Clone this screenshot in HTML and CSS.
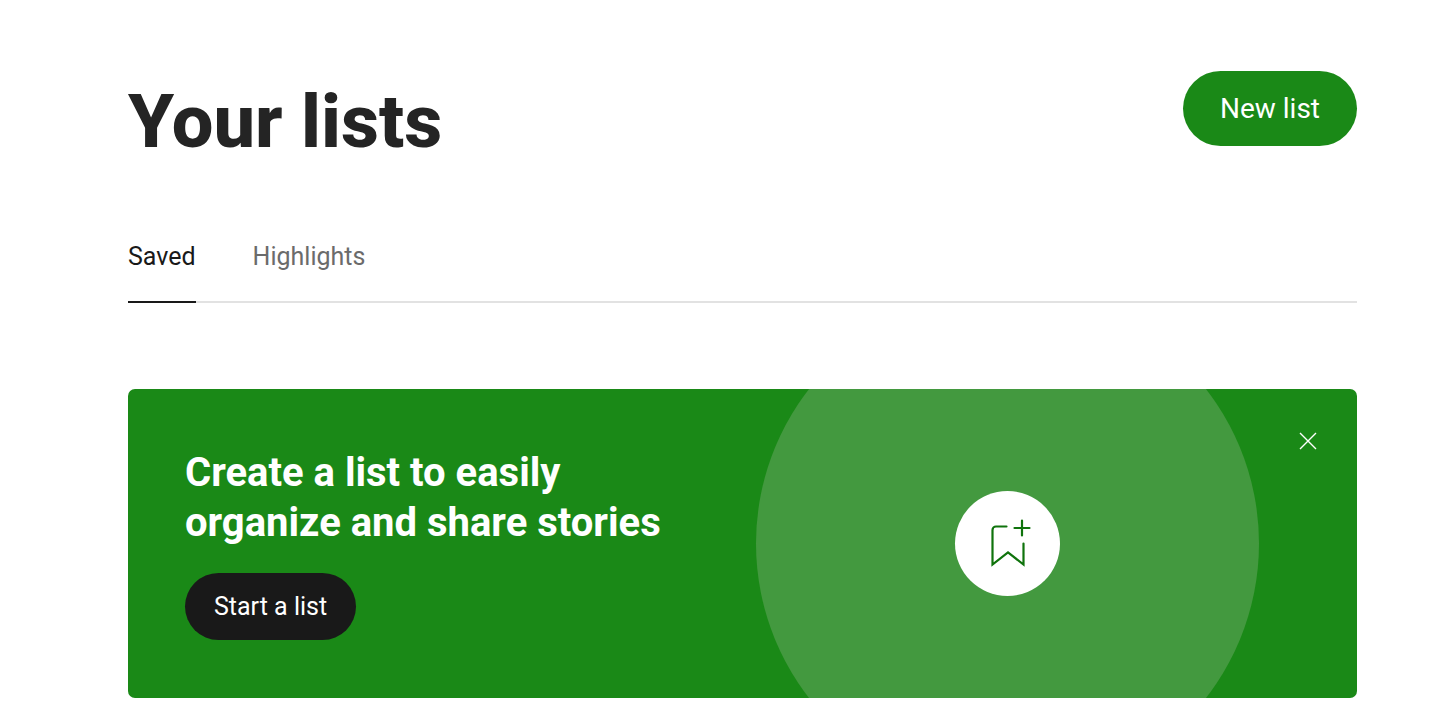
FILE: index.html
```
<!DOCTYPE html>
<html lang="en">
<head>
    <meta charset="UTF-8">
    <meta name="viewport" content="width=device-width, initial-scale=1.0">
    <title>Your lists</title>
    <link rel="stylesheet" href="styles.css">
</head>
<body>
    <main class="page">
        <header class="page-header">
            <h1>Your lists</h1>
            <button type="button" class="btn btn-new">New list</button>
        </header>

        <nav class="tabs">
            <a href="#" class="tab active">Saved</a>
            <a href="#" class="tab">Highlights</a>
        </nav>

        <!-- Create a list banner -->
        <section class="banner">
            <div class="banner-text">
                <h2>Create a list to easily<br>organize and share stories</h2>
                <button type="button" class="btn btn-start">Start a list</button>
            </div>
            <div class="circle">
                <div class="circle-icon">
                    <svg width="56" height="56" viewBox="0 0 56 56" fill="none" stroke="#0f730c" stroke-width="2.2" stroke-linecap="round">
                        <path d="M26.500 10.500H16a3.500 3.500 0 0 0-3.500 3.500V48.500L28 36.500l15.500 12V27.500"/>
                        <path d="M42 4.500v15M34.500 12h15"/>
                    </svg>
                </div>
            </div>
            <button type="button" class="close" aria-label="Close">
                <svg width="18" height="18" viewBox="0 0 18 18" stroke="#fff" stroke-width="1.4">
                    <path d="M1 1l16 16M17 1L1 17"/>
                </svg>
            </button>
        </section>
    </main>
</body>
</html>
```
FILE: styles.css
```
* {
    box-sizing: border-box;
}

body {
    margin: 0;
    background: #fff;
    color: #242424;
    font-family: Roboto, Arial, sans-serif;
}

.page {
    padding: 71px 99px 26px 128px;
}

.page-header {
    display: flex;
    justify-content: space-between;
    align-items: flex-start;
}

h1 {
    margin: 0;
    padding-top: 5px;
    font-size: 74px;
    line-height: 92px;
    font-weight: 800;
}

.btn {
    border: none;
    border-radius: 40px;
    color: #fff;
    font-family: inherit;
    cursor: pointer;
}

.btn-new {
    padding: 0 37px;
    background: #1a8917;
    font-size: 28px;
    line-height: 75px;
}

.tabs {
    display: flex;
    gap: 57px;
    margin-top: 71px;
    border-bottom: 2px solid #e2e2e2;
}

.tab {
    margin-bottom: -2px;
    padding-bottom: 26px;
    border-bottom: 2px solid transparent;
    color: #6b6b6b;
    font-size: 25px;
    line-height: 36px;
    text-decoration: none;
}

.tab.active {
    color: #191919;
    border-bottom-color: #191919;
}

.banner {
    display: grid;
    grid-template-columns: 1fr 503px 98px;
    margin-top: 86px;
    border-radius: 7px;
    background: #1a8917;
    overflow: hidden;
}

.banner-text {
    padding: 59px 0 57px 57px;
    white-space: nowrap;
}

h2 {
    margin: 0 0 25px;
    color: #fff;
    font-size: 40px;
    line-height: 50px;
    font-weight: 700;
}

.btn-start {
    padding: 0 29px;
    background: #191919;
    font-size: 25px;
    line-height: 67px;
}

/* taller than the banner, so it is cut off at the top and bottom */
.circle {
    display: flex;
    align-items: center;
    justify-content: center;
    height: 503px;
    margin: -97px 0;
    border-radius: 50%;
    background: #43993f;
}

.circle-icon {
    display: flex;
    align-items: center;
    justify-content: center;
    width: 105px;
    height: 105px;
    border-radius: 50%;
    background: #fff;
}

.close {
    display: flex;
    align-items: center;
    justify-content: center;
    justify-self: center;
    width: 32px;
    height: 32px;
    margin-top: 36px;
    padding: 0;
    border: none;
    background: none;
    cursor: pointer;
}
```
